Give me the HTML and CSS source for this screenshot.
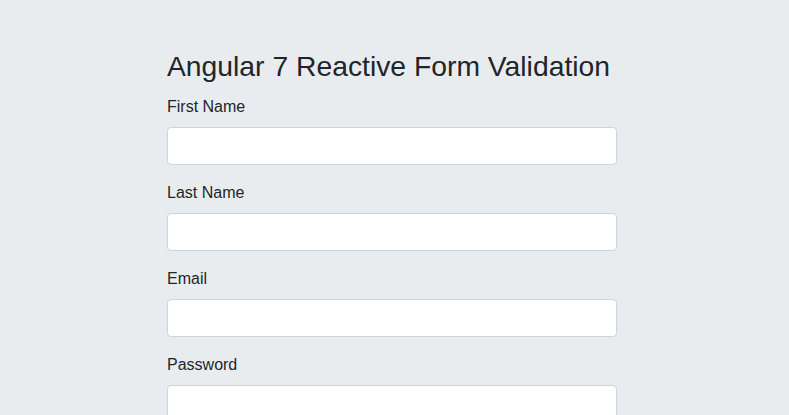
FILE: index.html
```html
<!DOCTYPE html>
<html>
<head>
<meta charset="utf-8">
<link rel="stylesheet" href="styles.css">
</head>
<body>
<div class="page">
  <form class="form">
    <h3 class="title">Angular 7 Reactive Form Validation</h3>
    <div class="group">
      <label class="label">First Name</label>
      <input class="input" type="text">
    </div>
    <div class="group">
      <label class="label">Last Name</label>
      <input class="input" type="text">
    </div>
    <div class="group">
      <label class="label">Email</label>
      <input class="input" type="text">
    </div>
    <div class="group">
      <label class="label">Password</label>
      <input class="input" type="password">
    </div>
  </form>
</div>
</body>
</html>
```
FILE: styles.css
```css
html, body {
  margin: 0;
  padding: 0;
  background: #e9ecef;
  height: 100%;
  overflow: hidden;
}
body {
  font-family: "Liberation Sans", Arial, sans-serif;
  color: #212529;
  font-size: 16px;
  line-height: 1.5;
}
.page {
  padding-top: 50px;
}
.form {
  width: 450px;
  margin-left: 167px;
}
.title {
  margin: 0 0 10.6px;
  font-size: 28.3px;
  font-weight: 500;
  line-height: 1.2;
}
.group {
  margin-bottom: 16px;
}
.label {
  display: block;
  margin-bottom: 8px;
}
.input {
  display: block;
  box-sizing: border-box;
  width: 100%;
  height: 38px;
  padding: 6px 12px;
  font-size: 16px;
  font-family: inherit;
  background: #fff;
  border: 1px solid #ced4da;
  border-radius: 4px;
  margin: 0;
}
```
